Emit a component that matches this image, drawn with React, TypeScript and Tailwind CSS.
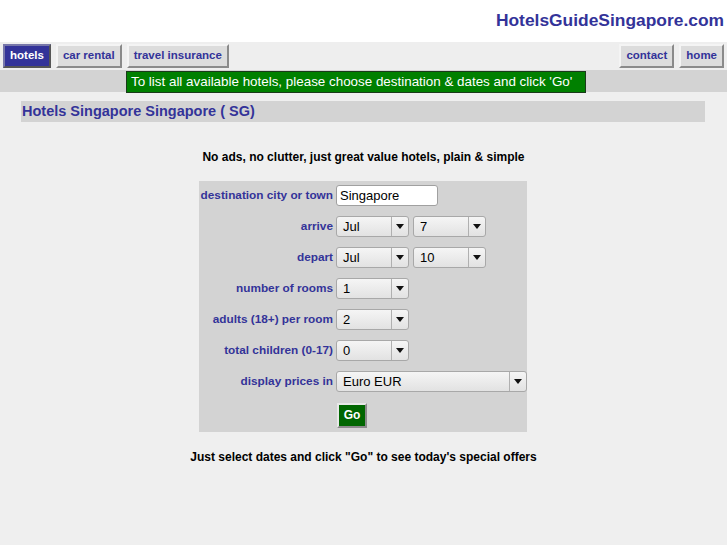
import React from "react"

const font = { fontFamily: '"Liberation Sans", Arial, sans-serif' }

function Select({ value, width }: { value: string; width: string }) {
  return (
    <div
      className={`${width} h-[21px] flex items-stretch rounded-[3px] border border-[#a8a8a8] bg-gradient-to-b from-[#f5f5f5] to-[#e2e2e2] text-[13px] text-black`}
    >
      <span className="flex-1 flex items-center pl-[6px] leading-none">{value}</span>
      <span className="w-[17px] flex items-center justify-center border-l border-[#b0b0b0]">
        <svg width="8" height="5" viewBox="0 0 8 5">
          <path d="M0 0H8L4 5Z" fill="#111" />
        </svg>
      </span>
    </div>
  )
}

function NavButton({ label, active }: { label: string; active?: boolean }) {
  return (
    <button
      className={`h-[24px] px-[5px] text-[11.5px] font-bold border-2 ${
        active
          ? "bg-[#333399] text-white border-t-[#7777aa] border-l-[#7777aa] border-r-[#555] border-b-[#555]"
          : "bg-[#dcdcdc] text-[#333399] border-t-[#f4f4f4] border-l-[#f4f4f4] border-r-[#8a8a8a] border-b-[#8a8a8a]"
      }`}
    >
      {label}
    </button>
  )
}

function Row({ label, children }: { label: string; children: React.ReactNode }) {
  return (
    <>
      <div className="text-right text-[11.8px] font-bold text-[#333399] h-[21px] flex items-center justify-end whitespace-nowrap">
        {label}
      </div>
      <div className="flex gap-[4px] h-[21px]">{children}</div>
    </>
  )
}

export default function App() {
  return (
    <div className="w-[727px] h-[545px] bg-[#efefef] overflow-hidden" style={font}>
      <header className="h-[42px] bg-white flex items-center justify-end pr-[3px]">
        <h1 className="text-[17.4px] font-bold text-[#333399] mt-[-2px]">HotelsGuideSingapore.com</h1>
      </header>
      <nav className="h-[28px] bg-[#eeeeee] flex items-center justify-between px-[3px]">
        <div className="flex gap-[5px]">
          <NavButton label="hotels" active />
          <NavButton label="car rental" />
          <NavButton label="travel insurance" />
        </div>
        <div className="flex gap-[5px]">
          <NavButton label="contact" />
          <NavButton label="home" />
        </div>
      </nav>
      <div className="h-[22px] bg-[#d3d3d3] flex items-start pl-[126px]">
        <div className="h-[22px] w-[460px] mt-[1px] bg-[#008000] border border-[#1a3a1a] text-white text-[13.4px] flex items-center px-[4px] whitespace-nowrap">
          To list all available hotels, please choose destination &amp; dates and click 'Go'
        </div>
      </div>
      <main className="pt-[9px] px-[21px]">
        <h2 className="w-[684px] h-[21px] bg-[#d3d3d3] text-[14.5px] font-bold text-[#333399] flex items-center pl-[1px]">
          Hotels Singapore Singapore ( SG)
        </h2>
        <p className="text-center text-[12px] font-bold text-black mt-[26px] ml-[-21px] w-[727px]">
          No ads, no clutter, just great value hotels, plain &amp; simple
        </p>
        <div className="ml-[178px] mt-[15px] w-[328px] h-[251px] bg-[#d3d3d3] pt-[4px] pl-[1px]">
          <div className="grid grid-cols-[133px_auto] gap-x-[3px] gap-y-[10px]">
            <Row label="destination city or town">
              <div className="w-[102px] h-[21px] bg-white border border-[#a0a0a0] rounded-[3px] text-[13px] flex items-center pl-[3px] text-black">
                Singapore
              </div>
            </Row>
            <Row label="arrive">
              <Select value="Jul" width="w-[73px]" />
              <Select value="7" width="w-[73px]" />
            </Row>
            <Row label="depart">
              <Select value="Jul" width="w-[73px]" />
              <Select value="10" width="w-[73px]" />
            </Row>
            <Row label="number of rooms">
              <Select value="1" width="w-[73px]" />
            </Row>
            <Row label="adults (18+) per room">
              <Select value="2" width="w-[73px]" />
            </Row>
            <Row label="total children (0-17)">
              <Select value="0" width="w-[73px]" />
            </Row>
            <Row label="display prices in">
              <Select value="Euro EUR" width="w-[191px]" />
            </Row>
            <div />
            <div>
              <button className="w-[30px] h-[25px] ml-[1px] bg-[#006600] text-white text-[12px] font-bold border-2 border-t-[#e8e8e8] border-l-[#e8e8e8] border-r-[#8a8a8a] border-b-[#8a8a8a]">
                Go
              </button>
            </div>
          </div>
        </div>
        <p className="text-center text-[12px] font-bold text-black mt-[16px] ml-[-21px] w-[727px]">
          Just select dates and click "Go" to see today's special offers
        </p>
      </main>
    </div>
  )
}
